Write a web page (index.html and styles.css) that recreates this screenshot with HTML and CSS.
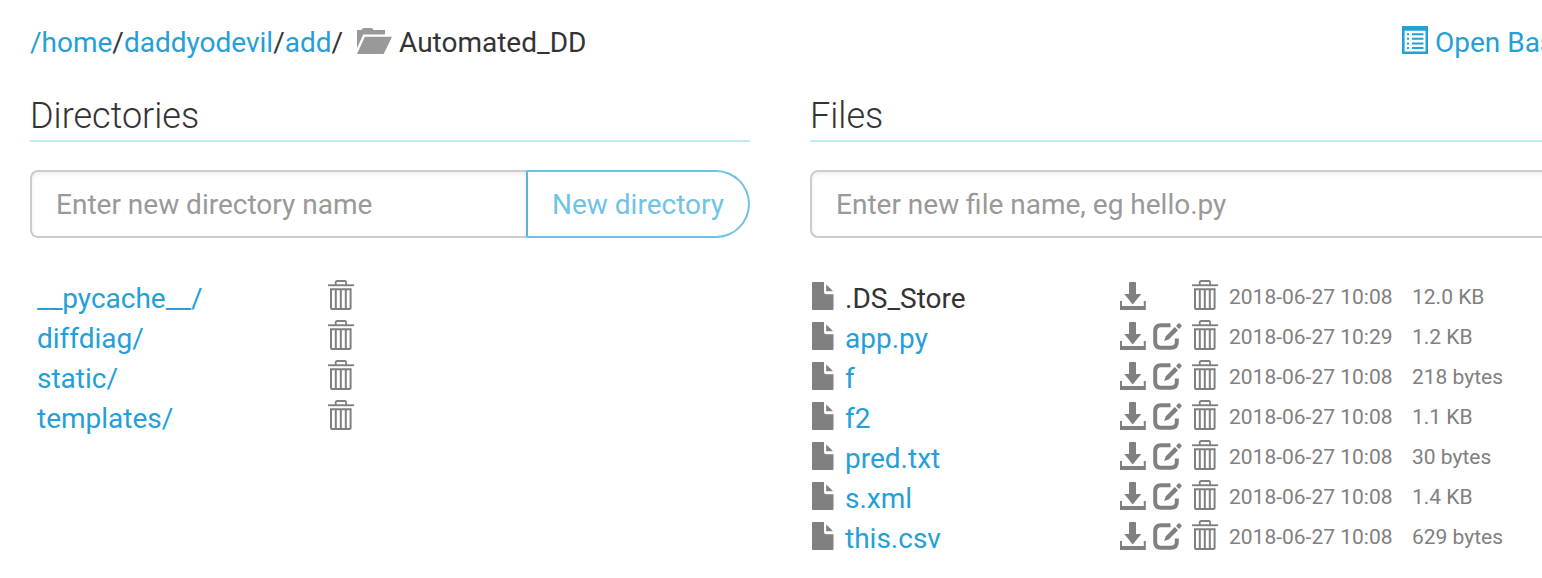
FILE: index.html
```html
<!DOCTYPE html>
<html lang="en">
<head>
    <meta charset="UTF-8">
    <meta name="viewport" content="width=device-width, initial-scale=1.0">
    <title>Files: Automated_DD</title>
    <link rel="stylesheet" href="styles.css">
</head>
<body>
    <!-- shared icons -->
    <svg class="icon-defs" width="0" height="0">
        <symbol id="icon-file" viewBox="0 0 22 28">
            <path d="M1 0H12V10Q12 12.2 14.2 12.2H21.5V27Q21.5 28 20.5 28H1Q0 28 0 27V1Q0 0 1 0Z"/>
            <path d="M14.2 2.5L21 9.2H14.2Z"/>
        </symbol>
        <symbol id="icon-download" viewBox="0 0 26 28">
            <path d="M0 19H2V24H23.8V19H25.8V28H0Z"/>
            <path d="M10 0H15Q16 0 16 1V12H21.3L12.7 22.5L4.3 12H9V1Q9 0 10 0Z"/>
        </symbol>
        <symbol id="icon-edit" viewBox="0 0 29 28">
            <path d="M17.5 3.2H8Q2.2 3.2 2.2 9V20Q2.2 25.8 8 25.8H18Q23.8 25.8 23.8 20V16.5" fill="none" stroke="currentColor" stroke-width="4"/>
            <path d="M11.2 18.9L12.6 14.4L21.8 5.1L25 8.3L15.7 17.5Z"/>
            <path d="M23 3.9L25.3 1.6Q26.2 .9 27.1 1.7L28.3 2.9Q29 3.8 28.3 4.7L26 7Z"/>
        </symbol>
        <symbol id="icon-trash" viewBox="0 0 26 30">
            <path d="M0 4.3H26V6.2H0Z"/>
            <path d="M7.7 5V2.4Q7.7 1 9.1 1H16.7Q18.1 1 18.1 2.4V5" fill="none" stroke="currentColor" stroke-width="1.8"/>
            <path fill-rule="evenodd" d="M2 8.3H23.6V28Q23.6 30 21.6 30H4Q2 30 2 28ZM4 10.3V28H6.8V10.3ZM8.8 10.3V28H11.8V10.3ZM13.8 10.3V28H16.8V10.3ZM18.8 10.3V28H21.6V10.3Z"/>
        </symbol>
    </svg>

    <div class="container">
        <header class="topbar">
            <div class="breadcrumbs">
                <a href="#">/home</a>/<a href="#">daddyodevil</a>/<a href="#">add</a>/
                <svg class="icon-folder" viewBox="0 0 35 26">
                    <path d="M0 2H4.5Q5 0 7 0H14Q16 0 16.5 2H28V6.6H6.3L0 20Z"/>
                    <path d="M7.8 8.8H35L26.7 26H0Z"/>
                </svg>
                <span>Automated_DD</span>
            </div>
            <a class="console-link" href="#">
                <svg class="icon-list" viewBox="0 0 26 28">
                    <path fill-rule="evenodd" d="M0 0H26V28H0ZM2.6 4.8V25.6H23.5V4.8Z"/>
                    <path d="M5 7.2H7V9.2H5ZM10 7.2H21.5V9.2H10ZM5 11.8H7V13.8H5ZM10 11.8H21.5V13.8H10ZM5 16.4H7V18.4H5ZM10 16.4H21.5V18.4H10ZM5 21H7V23H5ZM10 21H21.5V23H10Z"/>
                </svg>
                Open Bash
            </a>
        </header>

        <div class="columns">
            <section class="directories">
                <h2>Directories</h2>
                <form class="input-group">
                    <input type="text" placeholder="Enter new directory name">
                    <button type="button">New directory</button>
                </form>
                <ul class="dir-list">
                    <li><a class="name" href="#">__pycache__/</a><svg class="icon-trash"><use href="#icon-trash"/></svg></li>
                    <li><a class="name" href="#">diffdiag/</a><svg class="icon-trash"><use href="#icon-trash"/></svg></li>
                    <li><a class="name" href="#">static/</a><svg class="icon-trash"><use href="#icon-trash"/></svg></li>
                    <li><a class="name" href="#">templates/</a><svg class="icon-trash"><use href="#icon-trash"/></svg></li>
                </ul>
            </section>

            <section class="files">
                <h2>Files</h2>
                <form class="input-group">
                    <input type="text" placeholder="Enter new file name, eg hello.py">
                </form>
                <ul class="file-list">
                    <li>
                        <svg class="icon-file"><use href="#icon-file"/></svg>
                        <span class="name">.DS_Store</span>
                        <svg class="icon-download"><use href="#icon-download"/></svg>
                        <span></span>
                        <svg class="icon-trash"><use href="#icon-trash"/></svg>
                        <span class="meta">2018-06-27 10:08</span>
                        <span class="meta">12.0 KB</span>
                    </li>
                    <li>
                        <svg class="icon-file"><use href="#icon-file"/></svg>
                        <a class="name" href="#">app.py</a>
                        <svg class="icon-download"><use href="#icon-download"/></svg>
                        <svg class="icon-edit"><use href="#icon-edit"/></svg>
                        <svg class="icon-trash"><use href="#icon-trash"/></svg>
                        <span class="meta">2018-06-27 10:29</span>
                        <span class="meta">1.2 KB</span>
                    </li>
                    <li>
                        <svg class="icon-file"><use href="#icon-file"/></svg>
                        <a class="name" href="#">f</a>
                        <svg class="icon-download"><use href="#icon-download"/></svg>
                        <svg class="icon-edit"><use href="#icon-edit"/></svg>
                        <svg class="icon-trash"><use href="#icon-trash"/></svg>
                        <span class="meta">2018-06-27 10:08</span>
                        <span class="meta">218 bytes</span>
                    </li>
                    <li>
                        <svg class="icon-file"><use href="#icon-file"/></svg>
                        <a class="name" href="#">f2</a>
                        <svg class="icon-download"><use href="#icon-download"/></svg>
                        <svg class="icon-edit"><use href="#icon-edit"/></svg>
                        <svg class="icon-trash"><use href="#icon-trash"/></svg>
                        <span class="meta">2018-06-27 10:08</span>
                        <span class="meta">1.1 KB</span>
                    </li>
                    <li>
                        <svg class="icon-file"><use href="#icon-file"/></svg>
                        <a class="name" href="#">pred.txt</a>
                        <svg class="icon-download"><use href="#icon-download"/></svg>
                        <svg class="icon-edit"><use href="#icon-edit"/></svg>
                        <svg class="icon-trash"><use href="#icon-trash"/></svg>
                        <span class="meta">2018-06-27 10:08</span>
                        <span class="meta">30 bytes</span>
                    </li>
                    <li>
                        <svg class="icon-file"><use href="#icon-file"/></svg>
                        <a class="name" href="#">s.xml</a>
                        <svg class="icon-download"><use href="#icon-download"/></svg>
                        <svg class="icon-edit"><use href="#icon-edit"/></svg>
                        <svg class="icon-trash"><use href="#icon-trash"/></svg>
                        <span class="meta">2018-06-27 10:08</span>
                        <span class="meta">1.4 KB</span>
                    </li>
                    <li>
                        <svg class="icon-file"><use href="#icon-file"/></svg>
                        <a class="name" href="#">this.csv</a>
                        <svg class="icon-download"><use href="#icon-download"/></svg>
                        <svg class="icon-edit"><use href="#icon-edit"/></svg>
                        <svg class="icon-trash"><use href="#icon-trash"/></svg>
                        <span class="meta">2018-06-27 10:08</span>
                        <span class="meta">629 bytes</span>
                    </li>
                </ul>
            </section>
        </div>
    </div>
</body>
</html>
```
FILE: styles.css
```css
* {
    box-sizing: border-box;
}

body {
    font-family: Roboto, sans-serif;
    font-size: 28px;
    line-height: 40px;
    margin: 0;
    background: #fff;
    color: #333;
    overflow: hidden;
}

a {
    color: #249fd8;
    text-decoration: none;
}

svg {
    fill: currentColor;
    color: #808080;
    flex: none;
}

.icon-defs {
    display: none;
}

.container {
    padding: 23px 0 0 30px;
    height: 578px;
    overflow: hidden;
}

.topbar {
    display: flex;
    white-space: nowrap;
    height: 40px;
}

.breadcrumbs {
    width: 1372px;
    flex: none;
}

.icon-folder {
    width: 35px;
    height: 26px;
    margin-left: 7px;
    color: #999;
    vertical-align: -2px;
}

.console-link {
    flex: none;
}

.icon-list {
    width: 26px;
    height: 28px;
    color: #249fd8;
    vertical-align: -2px;
}

.columns {
    display: grid;
    grid-template-columns: 720px 780px;
    column-gap: 60px;
    margin-top: 32px;
}

h2 {
    font-size: 36px;
    font-weight: 300;
    line-height: 40px;
    height: 47px;
    margin: 0 0 28px;
    padding-top: 1px;
    border-bottom: 2px solid #bfebfc;
}

.input-group {
    display: flex;
    height: 68px;
    margin: 0 0 40px;
}

.input-group input {
    flex: 1;
    min-width: 0;
    font: inherit;
    padding: 2px 24px 0;
    border: 2px solid #ccc;
    border-radius: 8px;
    box-shadow: inset 0 2px 4px rgba(0, 0, 0, 0.075);
}

.input-group input::placeholder {
    color: #999;
    opacity: 1;
}

.directories .input-group input {
    border-right: none;
    border-radius: 8px 0 0 8px;
}

.input-group button {
    width: 224px;
    font: inherit;
    color: #6fc3e6;
    background: #fff;
    padding: 2px 0 0;
    border: 2px solid #6fc3e6;
    border-left-color: #5bb3d3;
    border-radius: 0 34px 34px 0;
}

ul {
    list-style: none;
    margin: 0;
    padding: 0;
}

.dir-list li {
    display: grid;
    grid-template-columns: 291px 26px;
    align-items: center;
    height: 40px;
    padding-left: 7px;
}

.file-list li {
    display: grid;
    grid-template-columns: 33px 275px 33px 39px 37px 183px 150px;
    align-items: center;
    height: 40px;
    padding-left: 2px;
}

.name {
    line-height: 38px;
    padding-top: 2px;
}

.meta {
    font-size: 21px;
    line-height: 30px;
    margin-bottom: 2px;
    color: #808080;
    white-space: nowrap;
}

.icon-file {
    width: 22px;
    height: 28px;
    margin-bottom: 4px;
}

.icon-download {
    width: 26px;
    height: 28px;
    margin-bottom: 4px;
}

.icon-edit {
    width: 29px;
    height: 28px;
    margin-bottom: 4px;
}

.icon-trash {
    width: 26px;
    height: 30px;
    margin-bottom: 6px;
}
```
